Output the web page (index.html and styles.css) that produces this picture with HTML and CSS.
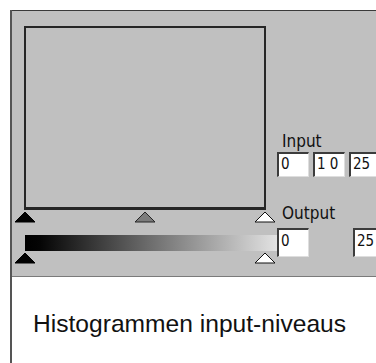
FILE: index.html
```html
<!DOCTYPE html>
<html lang="nl">
<head>
  <meta charset="UTF-8" />
  <title>Histogrammen input-niveaus</title>
  <link rel="stylesheet" href="styles.css">
</head>
<body>

<div class="frame">
  <div class="panel">
    <div class="left">
      <div class="histogram"></div>

      <div class="tri-row">
        <svg class="tri" viewBox="0 0 22 12"><polygon points="11,1 21,11 1,11" class="tri-black"/></svg>
        <svg class="tri" viewBox="0 0 22 12"><polygon points="11,1 21,11 1,11" class="tri-gray"/></svg>
        <svg class="tri" viewBox="0 0 22 12"><polygon points="11,1 21,11 1,11" class="tri-white"/></svg>
      </div>

      <div class="gradient"></div>

      <div class="tri-row tri-row-low">
        <svg class="tri" viewBox="0 0 22 12"><polygon points="11,1 21,11 1,11" class="tri-black"/></svg>
        <svg class="tri" viewBox="0 0 22 12"><polygon points="11,1 21,11 1,11" class="tri-white"/></svg>
      </div>
    </div>

    <div class="right">
      <div class="label">Input</div>
      <div class="fields">
        <div class="field">0</div>
        <div class="field">1 0</div>
        <div class="field">25</div>
      </div>

      <div class="label label-out">Output</div>
      <div class="fields fields-out">
        <div class="field field-tall">0</div>
        <div class="field field-tall">25</div>
      </div>
    </div>
  </div>

  <div class="caption">Histogrammen input-niveaus</div>
</div>

</body>
</html>
```

FILE: styles.css
```css
body {
  margin: 0;
  background: #ffffff;
  font-family: 'Liberation Sans', Arial, sans-serif;
  overflow: hidden;
}

.frame {
  margin: 10px 0 0 10px;
  border-left: 2px solid #555555;
  height: 353px;
}

.panel {
  display: flex;
  height: 265px;
  background: #c0c0c0;
  border-top: 1px solid #3a3a3a;
  border-bottom: 1px solid #7a7a7a;
  overflow: hidden;
}

.left {
  width: 263px;
  padding-left: 2px;
  flex-shrink: 0;
}

.histogram {
  margin: 15px 0 0 10px;
  width: 238px;
  height: 179px;
  border: 2px solid #262626;
  border-bottom-width: 3px;
}

.tri-row {
  display: flex;
  justify-content: space-between;
  width: 262px;
  height: 12px;
  margin-top: 1px;
}

.tri-row-low {
  margin-top: 1px;
}

.tri {
  width: 22px;
  height: 12px;
  display: block;
}

.tri-black {
  fill: #000000;
  stroke: #000000;
}

.tri-gray {
  fill: #7c7c7c;
  stroke: #262626;
}

.tri-white {
  fill: #ffffff;
  stroke: #111111;
}

.gradient {
  margin: 12px 0 0 11px;
  width: 252px;
  height: 16px;
  background: linear-gradient(to right, #000000 0%, #050505 6%, #6e6e6e 50%, #e2e2e2 100%);
}

.right {
  flex: 1;
  padding-top: 120px;
}

.label {
  font-family: 'Liberation Sans Narrow', 'DejaVu Sans Condensed', 'Liberation Sans', sans-serif;
  font-size: 17px;
  line-height: 20px;
  height: 20px;
  padding-left: 5px;
  color: #111111;
}

.label-out {
  margin-top: 26px;
}

.fields {
  display: flex;
  gap: 4px;
  margin-top: 1px;
}

.fields-out {
  gap: 44px;
  margin-top: 5px;
}

.field {
  flex-shrink: 0;
  width: 27px;
  height: 22px;
  padding-left: 2px;
  background: #ffffff;
  border-top: 2px solid #3c3c3c;
  border-left: 2px solid #3c3c3c;
  border-right: 1px solid #dedede;
  border-bottom: 1px solid #dedede;
  font-family: 'Liberation Sans Narrow', 'DejaVu Sans Condensed', 'Liberation Sans', sans-serif;
  font-size: 15px;
  line-height: 21px;
  color: #111111;
}

.field-tall {
  height: 26px;
  line-height: 22px;
}

.caption {
  padding: 33px 0 0 21px;
  font-size: 24.6px;
  line-height: 28px;
  color: #111111;
}
```
